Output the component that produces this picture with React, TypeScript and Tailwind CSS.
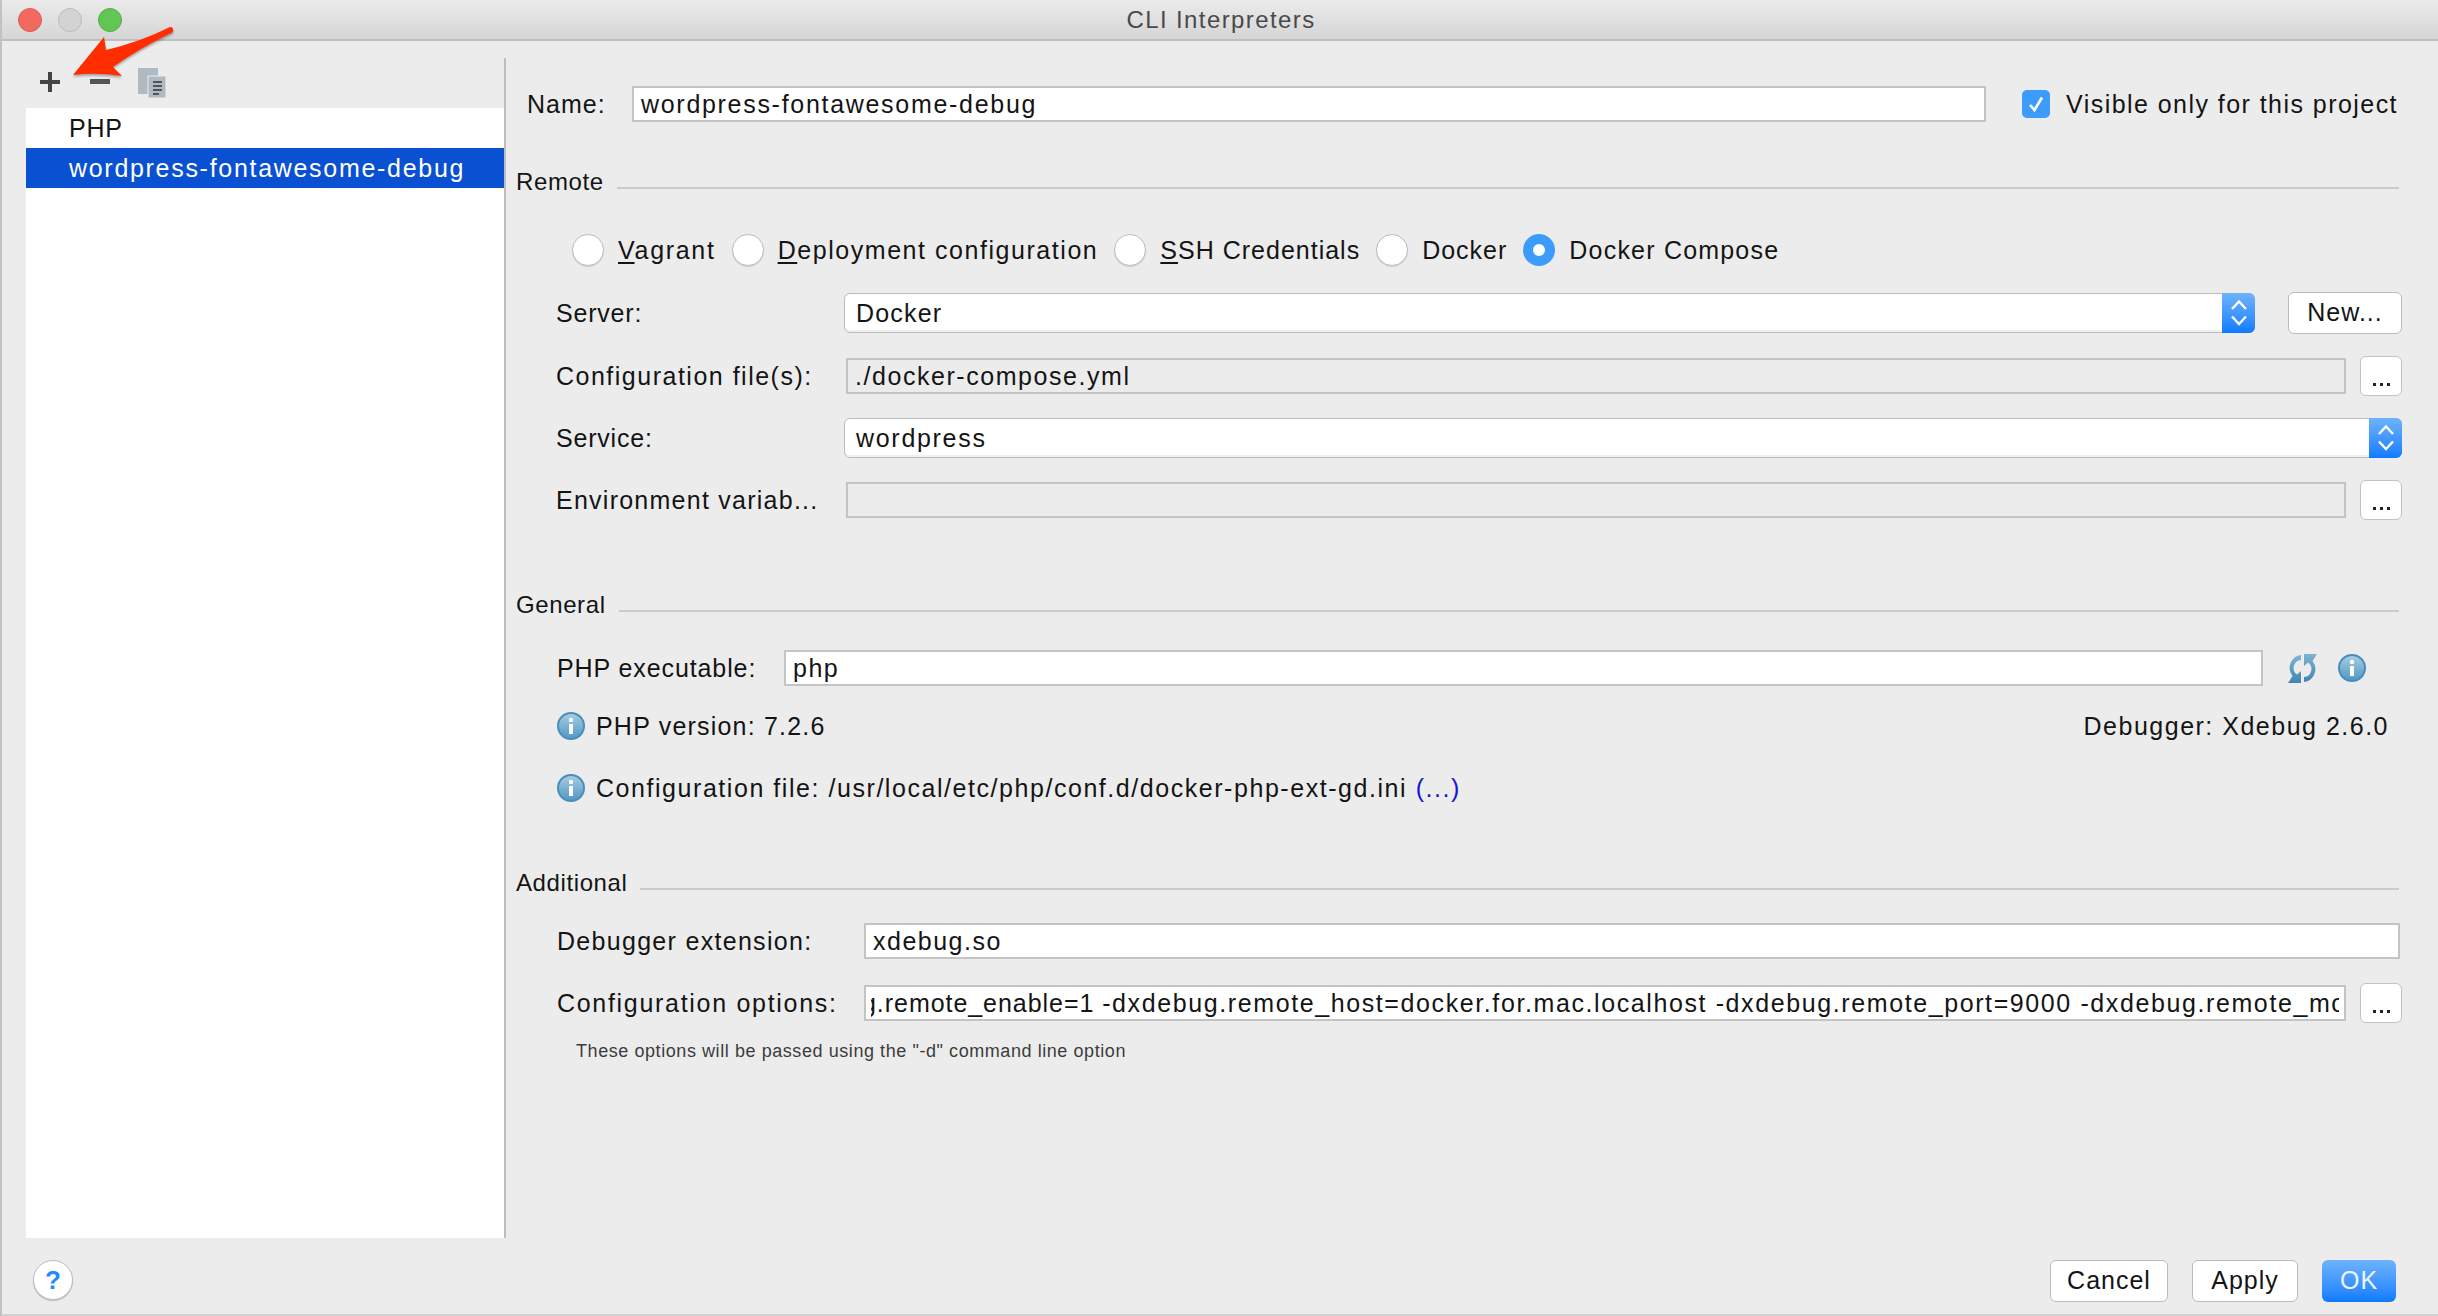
import { ReactNode } from "react"

const fieldText = "text-[25px] text-[#141414]"
const labelText = "text-[25px] leading-[30px] text-[#141414] whitespace-nowrap"

function SectionTitle({ title, className }: { title: string; className: string }) {
  return (
    <div className={`flex items-start h-[28px] pr-[3px] ${className}`}>
      <span className="text-[24px] leading-[28px] tracking-[0.6px] text-[#141414]">{title}</span>
      <div className="flex-1 h-[2px] mt-[19px] ml-[13px] bg-[#cbcbcb]" />
    </div>
  )
}

function Radio({ label, mnemonic, rest, checked, track }: { label?: string; mnemonic?: string; rest?: string; checked?: boolean; track: string }) {
  return (
    <div className="flex items-center gap-[14px]">
      {checked ? (
        <div className="w-[32px] h-[32px] rounded-full bg-[#3d9bfb] flex items-center justify-center">
          <div className="w-[12px] h-[12px] rounded-full bg-white" />
        </div>
      ) : (
        <div className="w-[32px] h-[32px] rounded-full bg-white border border-[#bdbdbd] shadow-[0_1px_1px_rgba(0,0,0,0.12)]" />
      )}
      <span className={`${labelText} ${track}`}>
        {mnemonic && <span className="underline underline-offset-[3px]">{mnemonic}</span>}
        {rest}
        {label}
      </span>
    </div>
  )
}

function Stepper() {
  return (
    <div className="w-[33px] shrink-0 -my-px -mr-px rounded-r-[6px] bg-gradient-to-b from-[#6cb3fb] to-[#0a7bff] flex items-center justify-center">
      <svg width="16" height="26" viewBox="0 0 16 26" fill="none" stroke="white" strokeWidth="2.4">
        <path d="M1 9 L8 1.5 L15 9" />
        <path d="M1 16.5 L8 24 L15 16.5" />
      </svg>
    </div>
  )
}

function Select({ value, className, track }: { value: string; className: string; track: string }) {
  return (
    <div className={`h-[40px] flex bg-white border border-[#bcbcbc] rounded-[6px] shadow-[inset_0_-2px_0_#f0f0f0] ${className}`}>
      <div className={`flex-1 pl-[11px] leading-[38px] ${fieldText} ${track}`}>{value}</div>
      <Stepper />
    </div>
  )
}

function Input({ value, className, disabled, track }: { value?: string; className: string; disabled?: boolean; track?: string }) {
  return (
    <div className={`h-[36px] px-[7px] border-2 border-[#c4c4c4] leading-[33px] whitespace-nowrap overflow-hidden ${disabled ? "bg-[#ececec]" : "bg-white"} ${fieldText} ${track ?? ""} ${className}`}>
      {value}
    </div>
  )
}

function DotsButton() {
  return (
    <div className="ml-[14px] w-[42px] h-[40px] shrink-0 bg-white border border-[#c2c2c2] rounded-[6px] flex items-end justify-center pb-[9px] gap-[4px]">
      <span className="w-[3px] h-[3px] bg-[#222]" />
      <span className="w-[3px] h-[3px] bg-[#222]" />
      <span className="w-[3px] h-[3px] bg-[#222]" />
    </div>
  )
}

function Button({ children, className }: { children: ReactNode; className: string }) {
  return (
    <div className={`h-[42px] bg-white border border-[#bcbcbc] rounded-[6px] flex items-center justify-center tracking-[1px] ${fieldText} ${className}`}>
      {children}
    </div>
  )
}

function InfoIcon() {
  return (
    <svg width="28" height="28" viewBox="0 0 28 28" className="shrink-0">
      <defs>
        <linearGradient id="infoFill" x1="0" y1="0" x2="0" y2="1">
          <stop offset="0" stopColor="#a9cde3" />
          <stop offset="1" stopColor="#4f97c4" />
        </linearGradient>
      </defs>
      <circle cx="14" cy="14" r="13" fill="url(#infoFill)" stroke="#4a8fbb" strokeWidth="2" />
      <circle cx="14" cy="8" r="2.2" fill="white" />
      <rect x="12" y="12" width="4" height="10" fill="white" />
    </svg>
  )
}

function ReloadIcon() {
  return (
    <svg width="29" height="29" viewBox="0 0 29 29" className="shrink-0">
      <defs>
        <linearGradient id="reloadFill" x1="0" y1="0" x2="0" y2="1">
          <stop offset="0" stopColor="#7fb3d3" />
          <stop offset="1" stopColor="#3f86b4" />
        </linearGradient>
      </defs>
      <path d="M13 1 A13 13 0 0 0 4.5 22 L0 29 L13 29 L13 17 L9 20.5 A8 8 0 0 1 13 6 Z" fill="url(#reloadFill)" />
      <path d="M16 28 A13 13 0 0 0 24.5 7 L29 0 L16 0 L16 12 L20 8.5 A8 8 0 0 1 16 23 Z" fill="url(#reloadFill)" />
    </svg>
  )
}

function Row({ label, labelClass, children, className }: { label: string; labelClass: string; children: ReactNode; className: string }) {
  return (
    <div className={`flex items-center ${className}`}>
      <div className={`shrink-0 ${labelText} ${labelClass}`}>{label}</div>
      {children}
    </div>
  )
}

export default function App() {
  return (
    <div className="relative w-[2438px] h-[1316px] flex flex-col bg-[#ececec] border-l-2 border-[#c2c2c2] overflow-hidden font-['Liberation_Sans',sans-serif]">
      {/* title bar */}
      <div className="h-[41px] shrink-0 grid grid-cols-[1fr_auto_1fr] items-center bg-gradient-to-b from-[#ebebeb] to-[#d5d5d5] border-b-2 border-[#bfbfbf]">
        <div className="flex items-center gap-[16px] pl-[16px]">
          <div className="w-[24px] h-[24px] rounded-full bg-[#f2695f] border border-[#df5a50]" />
          <div className="w-[24px] h-[24px] rounded-full bg-[#d3d3d3] border border-[#bcbcbc]" />
          <div className="w-[24px] h-[24px] rounded-full bg-[#62c655] border border-[#53b046]" />
        </div>
        <div className="text-[24px] leading-[30px] mt-[1px] ml-[2px] tracking-[1.4px] text-[#4a4a4a]">CLI Interpreters</div>
        <div />
      </div>

      {/* main area */}
      <div className="flex h-[1180px] mt-[17px] shrink-0">
        <div className="w-[478px] ml-[24px] shrink-0 flex flex-col">
          <div className="h-[50px] shrink-0 flex items-start pl-[14px] pt-[10px]">
            <svg width="126" height="32" viewBox="0 0 126 32">
              <path d="M0 14h20M10 4v20" stroke="#444" strokeWidth="4" fill="none" />
              <rect x="50" y="11" width="20" height="5" fill="#555" />
              <rect x="98" y="0" width="20" height="26" fill="#afbac2" />
              <rect x="108" y="8" width="18" height="22" fill="#afbac2" stroke="#ececec" strokeWidth="1" />
              <path d="M113 14h9M113 18h9M113 22h9M113 26h6" stroke="#555" strokeWidth="2" fill="none" />
            </svg>
          </div>
          <div className="flex-1 bg-white text-[25px]">
            <div className="h-[40px] pl-[43px] leading-[40px] tracking-[0.8px] text-[#141414]">PHP</div>
            <div className="h-[40px] pl-[43px] leading-[40px] tracking-[1.7px] bg-[#0a50d2] text-white">wordpress-fontawesome-debug</div>
          </div>
        </div>

        <div className="flex-1 min-w-0 flex flex-col border-l-2 border-[#bdbdbd] pl-[10px] pr-[36px]">
          <div className="flex items-center mt-[28px] pl-[11px]">
            <div className={`w-[105px] shrink-0 tracking-[1px] ${labelText}`}>Name:</div>
            <Input value="wordpress-fontawesome-debug" track="tracking-[1.7px]" className="w-[1354px]" />
            <div className="ml-[36px] w-[28px] h-[28px] rounded-[5px] bg-[#3d9bfb] flex items-center justify-center">
              <svg width="18" height="18" viewBox="0 0 18 18" fill="none" stroke="white" strokeWidth="2.6">
                <path d="M3 10 L7.5 15 L15 2.5" />
              </svg>
            </div>
            <div className={`ml-[16px] tracking-[1.45px] ${labelText}`}>Visible only for this project</div>
          </div>

          <SectionTitle title="Remote" className="mt-[46px]" />

          <div className="flex items-center gap-[16px] mt-[38px] pl-[56px]">
            <Radio mnemonic="V" rest="agrant" track="tracking-[1.7px]" />
            <Radio mnemonic="D" rest="eployment configuration" track="tracking-[1.55px]" />
            <Radio mnemonic="S" rest="SH Credentials" track="tracking-[1px]" />
            <Radio label="Docker" track="tracking-[1px]" />
            <Radio label="Docker Compose" checked track="tracking-[1.2px]" />
          </div>

          <Row label="Server:" labelClass="w-[288px] ml-[40px] tracking-[0.8px]" className="mt-[26px]">
            <Select value="Docker" track="tracking-[1.2px]" className="w-[1411px]" />
            <Button className="ml-[33px] w-[114px]">New...</Button>
          </Row>
          <Row label="Configuration file(s):" labelClass="w-[290px] ml-[40px] tracking-[1.5px]" className="mt-[22px]">
            <Input value="./docker-compose.yml" track="tracking-[1.55px]" disabled className="flex-1 min-w-0" />
            <DotsButton />
          </Row>
          <Row label="Service:" labelClass="w-[288px] ml-[40px] tracking-[0.8px]" className="mt-[22px]">
            <Select value="wordpress" track="tracking-[1.7px]" className="flex-1 min-w-0" />
          </Row>
          <Row label="Environment variab..." labelClass="w-[290px] ml-[40px] tracking-[1.25px]" className="mt-[22px]">
            <Input disabled className="flex-1 min-w-0" />
            <DotsButton />
          </Row>

          <SectionTitle title="General" className="mt-[71px]" />

          <Row label="PHP executable:" labelClass="w-[227px] ml-[41px] tracking-[0.9px]" className="mt-[31px]">
            <Input value="php" track="tracking-[1.5px]" className="w-[1479px]" />
            <div className="ml-[25px] flex items-center gap-[21px]">
              <ReloadIcon />
              <InfoIcon />
            </div>
          </Row>

          <div className="flex items-center h-[28px] mt-[26px] pl-[41px] pr-[13px]">
            <InfoIcon />
            <div className={`ml-[11px] flex-1 tracking-[1.2px] ${labelText}`}>PHP version: 7.2.6</div>
            <div className={`tracking-[1.5px] ${labelText}`}>Debugger: Xdebug 2.6.0</div>
          </div>

          <div className="flex items-center h-[28px] mt-[34px] pl-[41px]">
            <InfoIcon />
            <div className={`ml-[11px] tracking-[1.55px] ${labelText}`}>
              Configuration file: /usr/local/etc/php/conf.d/docker-php-ext-gd.ini <span className="text-[#1515d8]">(...)</span>
            </div>
          </div>

          <SectionTitle title="Additional" className="mt-[67px]" />

          <Row label="Debugger extension:" labelClass="w-[307px] ml-[41px] tracking-[1.3px]" className="mt-[26px]">
            <Input value="xdebug.so" track="tracking-[1.5px]" className="flex-1 min-w-0 mr-[2px]" />
          </Row>
          <Row label="Configuration options:" labelClass="w-[307px] ml-[41px] tracking-[1.7px]" className="mt-[24px]">
            <div className="flex-1 min-w-0 h-[36px] border-2 border-[#c4c4c4] px-[5px] bg-white">
              <div className={`overflow-hidden whitespace-nowrap leading-[33px] ${fieldText}`}>
                <span className="ml-[-9px] tracking-[0.95px]">g.remote_enable=1 </span>
                <span className="tracking-[1.6px]">-dxdebug.remote_host=docker.for.mac.localhost -dxdebug.remote_port=9000 -dxdebug.remote_mode=req</span>
              </div>
            </div>
            <DotsButton />
          </Row>
          <div className="mt-[16px] pl-[60px] text-[18px] leading-[24px] tracking-[0.57px] text-[#3c3c3c]">
            These options will be passed using the "-d" command line option
          </div>
        </div>
      </div>

      {/* footer */}
      <div className="flex-1 flex items-start justify-between pl-[31px] pr-[42px] pt-[22px] border-b-2 border-[#d2d2d2]">
        <div className="w-[40px] h-[40px] rounded-full bg-white border border-[#bdbdbd] shadow-[0_1px_1px_rgba(0,0,0,0.2)] flex items-center justify-center text-[26px] font-bold text-[#1d8cff]">
          ?
        </div>
        <div className="flex gap-[24px]">
          <Button className="w-[118px]">Cancel</Button>
          <Button className="w-[106px]">Apply</Button>
          <div className="w-[74px] h-[42px] rounded-[6px] bg-gradient-to-b from-[#6cb3fb] to-[#0a7bff] flex items-center justify-center text-[25px] tracking-[1px] text-[#eef5ff]">
            OK
          </div>
        </div>
      </div>

      {/* red annotation arrow on top of the screenshot */}
      <svg className="absolute left-[-2px] top-0 drop-shadow-[0_2px_1px_rgba(0,0,0,0.3)]" width="180" height="80" viewBox="0 0 180 80">
        <path d="M73 75 L104 37 L106 50 Q140 42 170 27 Q174 27 173 32 Q140 48 113 67 L122 76 Q95 72 73 75 Z" fill="#ff2d00" />
      </svg>
    </div>
  )
}
